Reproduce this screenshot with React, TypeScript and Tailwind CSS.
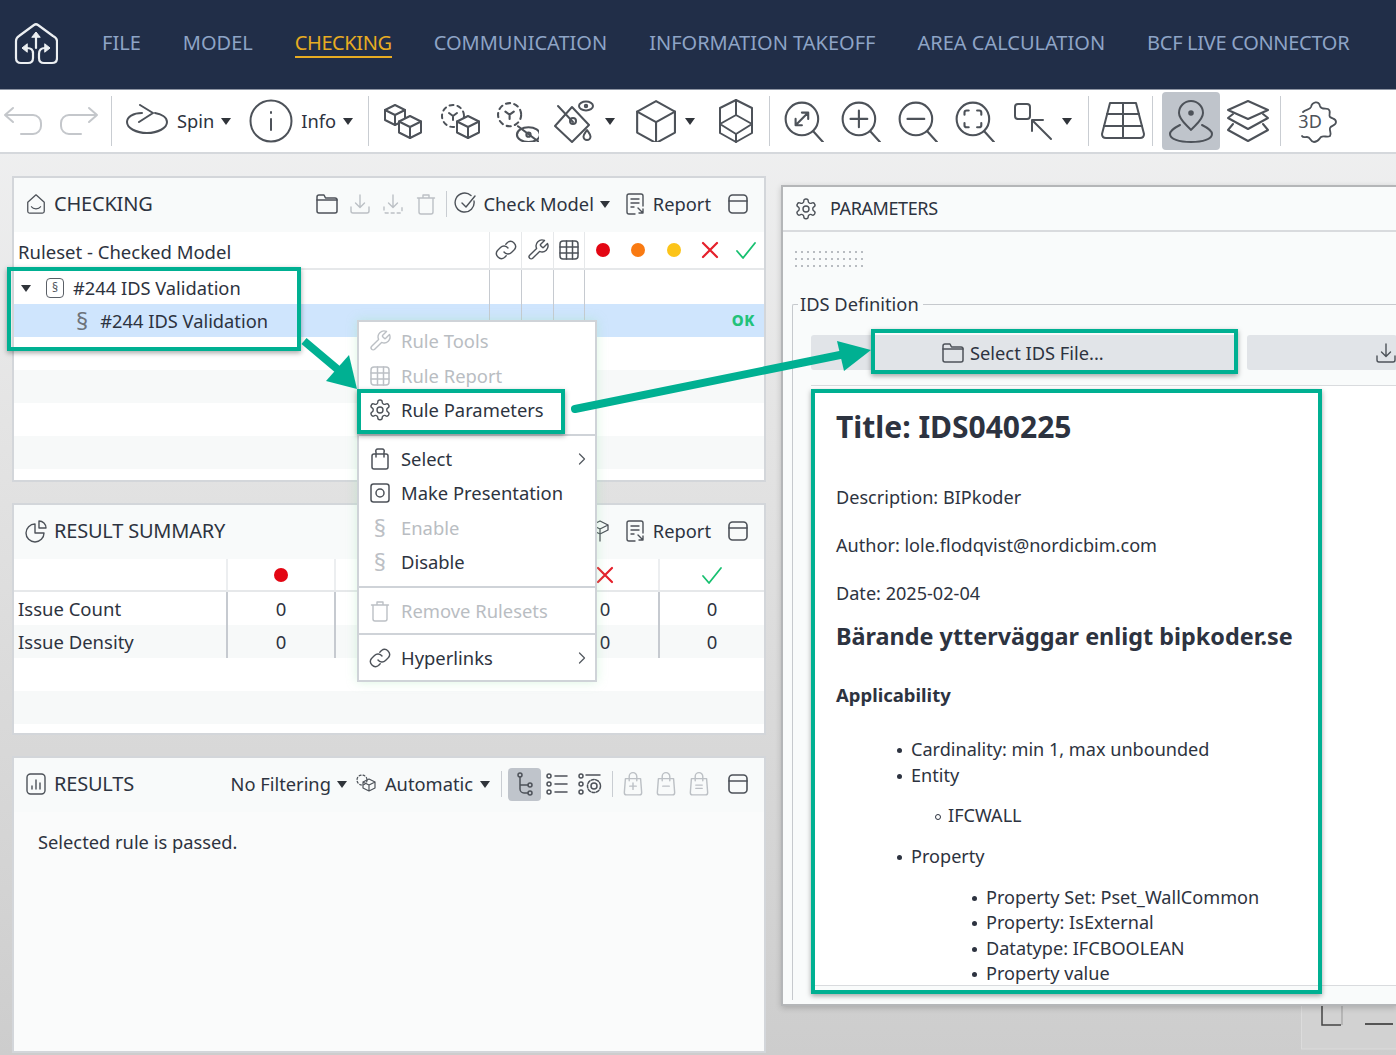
import type { ReactNode } from "react";
import { ChevronRight } from "lucide-react";

const TAN = "#4d5259";
const OFF = "#bcc0c5";

function Ico({ s = 40, w, h, c = TAN, sw = 2, vb = "0 0 40 40", children, className }: { s?: number; w?: number; h?: number; c?: string; sw?: number; vb?: string; children: ReactNode; className?: string }) {
  return (
    <svg width={w ?? s} height={h ?? s} viewBox={vb} fill="none" stroke={c} strokeWidth={sw} strokeLinecap="round" strokeLinejoin="round" className={className}>
      {children}
    </svg>
  );
}

const Caret = ({ className = "" }: { className?: string }) => (
  <span className={`inline-block w-0 h-0 border-l-[5.5px] border-r-[5.5px] border-t-[7px] border-l-transparent border-r-transparent border-t-[#30343a] ${className}`} />
);

const Sep = ({ className = "" }: { className?: string }) => <div className={`w-px h-[50px] bg-[#c9cdd2] shrink-0 ${className}`} />;

const Cube = ({ x, y, r, fill = "none" }: { x: number; y: number; r: number; fill?: string }) => (
  <g>
    <path fill={fill} d={`M${x} ${y - r}L${x + r} ${y - r / 2}V${y + r / 2}L${x} ${y + r}L${x - r} ${y + r / 2}V${y - r / 2}Z`} />
    <path d={`M${x - r} ${y - r / 2}L${x} ${y}L${x + r} ${y - r / 2}M${x} ${y}V${y + r}`} />
  </g>
);

const Mag = ({ children }: { children?: ReactNode }) => (
  <Ico s={42}>
    <circle cx="18" cy="18" r="15.5" />
    <path d="M29 30L38 40" />
    {children}
  </Ico>
);

const Gear = ({ s = 24, c = TAN }: { s?: number; c?: string }) => (
  <Ico s={s} vb="0 0 24 24" c={c} sw={1.4}>
    <circle cx="12" cy="12" r="3" />
    <path d="M12.2 2h-.4a2 2 0 0 0-2 2v.2a2 2 0 0 1-1 1.7l-.4.2a2 2 0 0 1-2 0l-.2-.1a2 2 0 0 0-2.7.7l-.2.4a2 2 0 0 0 .7 2.7l.2.1a2 2 0 0 1 1 1.7v.5a2 2 0 0 1-1 1.8l-.2.1a2 2 0 0 0-.7 2.7l.2.4a2 2 0 0 0 2.7.7l.2-.1a2 2 0 0 1 2 0l.4.2a2 2 0 0 1 1 1.7v.2a2 2 0 0 0 2 2h.4a2 2 0 0 0 2-2v-.2a2 2 0 0 1 1-1.7l.4-.2a2 2 0 0 1 2 0l.2.1a2 2 0 0 0 2.7-.7l.2-.4a2 2 0 0 0-.7-2.7l-.2-.1a2 2 0 0 1-1-1.8v-.5a2 2 0 0 1 1-1.7l.2-.1a2 2 0 0 0 .7-2.7l-.2-.4a2 2 0 0 0-2.7-.7l-.2.1a2 2 0 0 1-2 0l-.4-.2a2 2 0 0 1-1-1.7V4a2 2 0 0 0-2-2z" />
  </Ico>
);

const LinkI = ({ s = 24, c = TAN }: { s?: number; c?: string }) => (
  <Ico s={s} vb="0 0 24 24" c={c} sw={1.4}>
    <path d="M10 14a5 5 0 0 0 7.5.5l3-3a5 5 0 0 0-7-7l-1.7 1.7" />
    <path d="M14 10a5 5 0 0 0-7.5-.5l-3 3a5 5 0 0 0 7 7l1.7-1.7" />
  </Ico>
);

const WrenchI = ({ s = 24, c = TAN }: { s?: number; c?: string }) => (
  <Ico s={s} vb="0 0 24 24" c={c} sw={1.4}>
    <path d="M14.7 6.3a1 1 0 0 0 0 1.4l1.6 1.6a1 1 0 0 0 1.4 0l3.8-3.8a6 6 0 0 1-7.9 7.9l-6.9 6.9a2.1 2.1 0 0 1-3-3l6.9-6.9a6 6 0 0 1 7.9-7.9z" />
  </Ico>
);

const TableI = ({ s = 22, c = TAN }: { s?: number; c?: string }) => (
  <Ico s={s} vb="0 0 22 22" c={c} sw={1.5}>
    <rect x="2" y="2" width="18" height="18" rx="3" />
    <path d="M2 8h18M2 14h18M8.5 2v18M14.5 2v18" />
  </Ico>
);

const FolderI = ({ s = 24, c = TAN }: { s?: number; c?: string }) => (
  <Ico s={s} vb="0 0 24 24" c={c} sw={1.5}>
    <path d="M2 5a2 2 0 0 1 2-2h5l1.5 3H20a2 2 0 0 1 2 2v11a2 2 0 0 1-2 2H4a2 2 0 0 1-2-2z" />
    <path d="M2 8h20" />
  </Ico>
);

const DownI = ({ s = 24, c = OFF, dashed = false }: { s?: number; c?: string; dashed?: boolean }) => (
  <Ico s={s} vb="0 0 24 24" c={c} sw={1.4}>
    <path d="M12 3v12M7.5 11l4.5 4.5L16.5 11" />
    <path d="M3 15v4a2 2 0 0 0 2 2h14a2 2 0 0 0 2-2v-4" strokeDasharray={dashed ? "3 3" : undefined} />
  </Ico>
);

const TrashI = ({ s = 24, c = OFF }: { s?: number; c?: string }) => (
  <Ico s={s} vb="0 0 24 24" c={c} sw={1.4}>
    <path d="M5 6h14v14a2 2 0 0 1-2 2H7a2 2 0 0 1-2-2zM3.5 6h17M9 6V3h6v3" />
  </Ico>
);

const ReportI = () => (
  <Ico s={24} vb="0 0 24 24" sw={1.4}>
    <path d="M11 22H5a2 2 0 0 1-2-2V4a2 2 0 0 1 2-2h12a2 2 0 0 1 2 2v10" />
    <path d="M7 7h8M7 11h8M7 15h3M14 16l5 5M19 17v4h-4" />
  </Ico>
);

const PanelI = () => (
  <Ico s={24} vb="0 0 24 24" sw={1.6}>
    <rect x="3" y="3" width="18" height="18" rx="3.5" />
    <path d="M3 9h18" />
  </Ico>
);

const Section = ({ s = 24, c = "#8b9097" }: { s?: number; c?: string }) => (
  <span style={{ fontSize: s, color: c }} className="leading-none">§</span>
);

const Dot = ({ c }: { c: string }) => <span style={{ background: c }} className="block w-[14px] h-[14px] rounded-full" />;
const RedX = () => (
  <Ico s={20} vb="0 0 20 20" c="#e5202b" sw={2.2}><path d="M3 3l14 14M17 3L3 17" /></Ico>
);
const GreenCheck = () => (
  <Ico s={22} vb="0 0 22 22" c="#17c070" sw={1.8}><path d="M2 12l6 7L20 4" /></Ico>
);

const statusIcons = [<Dot c="#e30613" />, <Dot c="#f97a12" />, <Dot c="#fcc419" />, <RedX />, <GreenCheck />];

const navItems = ["FILE", "MODEL", "COMMUNICATION", "INFORMATION TAKEOFF", "AREA CALCULATION"];

function Header() {
  const item = "text-[20px] leading-[26px] text-[#8ea4c6] border-b-2 border-transparent";
  return (
    <header className="h-[90px] bg-[#212e48] flex items-center border-b border-[#8e95a3]">
      <svg width="44" height="44" viewBox="0 0 44 44" fill="none" stroke="#eceff2" strokeWidth="2.2" strokeLinecap="round" strokeLinejoin="round" className="ml-[14px] -mt-[2px]">
        <path d="M19 30V36Q19 41 14 41H7Q2 41 2 36V19Q2 16 5 14L20 3Q22 1.500 24 3L39 14Q43 16 43 19V36Q43 41 38 41H30Q25 41 25 36V32Q25 26 31 26" />
        <path d="M19 31Q19 26 13 26" />
        <path d="M22 26V15" />
        <path d="M13 22L8 26L13 30ZM18 15L22 10L26 15ZM31 22L36 26L31 30Z" fill="#eceff2" strokeWidth="1" />
      </svg>
      <nav className="flex items-center gap-[42px] ml-[44px] -mt-[1px]">
        <span className={item}>{navItems[0]}</span>
        <span className={item}>{navItems[1]}</span>
        <span className="text-[20px] leading-[26px] tracking-[-0.4px] text-[#e8ac22] border-b-2 border-[#e8ac22]">CHECKING</span>
        <span className={item}>{navItems[2]}</span>
        <span className={item}>{navItems[3]}</span>
        <span className={item}>{navItems[4]}</span>
        <span className="text-[20px] leading-[26px] tracking-[-0.3px] text-[#8ea4c6] border-b-2 border-transparent">BCF LIVE CONNECTOR</span>
      </nav>
    </header>
  );
}

function Toolbar() {
  return (
    <div className="h-[64px] bg-white border-b-2 border-[#d5d8dc] flex items-center text-[18.300px] text-[#2d3340]">
      <Ico w={40} h={32} vb="0 0 40 32" c="#c4c7cb" className="ml-[3px]"><path d="M10 3L2 10l8 7M2 10h28a8 8 0 0 1 8 8v3a8 8 0 0 1-8 8H18" /></Ico>
      <Ico w={40} h={32} vb="0 0 40 32" c="#c4c7cb" className="ml-[16px]"><path d="M30 3l8 7-8 7M38 10H10a8 8 0 0 0-8 8v3a8 8 0 0 0 8 8h12" /></Ico>
      <Sep className="ml-[12px]" />
      <Ico w={44} h={34} vb="0 0 44 34" className="ml-[13px]">
        <path d="M15 1L28 9L14 18" />
        <path d="M17 9C8 9 2 13 2 18C2 24 11 29 22 29C33 29 42 24 42 18C42 13 36 10 30 9" />
      </Ico>
      <span className="ml-[8px]">Spin</span>
      <Caret className="ml-[7px]" />
      <Ico s={44} className="ml-[18px]" vb="0 0 44 44"><circle cx="22" cy="22" r="20.500" /><path d="M22 20v11M22 13v1" /></Ico>
      <span className="ml-[8px]">Info</span>
      <Caret className="ml-[6.500px]" />
      <Sep className="ml-[15.500px]" />
      <div className="w-[57px] ml-[5px] flex justify-center"><Ico s={40}><Cube x={12} y={14} r={10} /><Cube x={27} y={26} r={11} fill="#fff" /></Ico></div>
      <div className="w-[57px] flex justify-center"><Ico s={40}><circle cx="13" cy="15" r="11" strokeDasharray="4 4" /><path d="M9 12l4 3 4-3M13 15v4" /><Cube x={28} y={26} r={11} fill="#fff" /></Ico></div>
      <div className="w-[60px] flex justify-center"><Ico s={42}><circle cx="12" cy="14" r="11" strokeDasharray="4 4" /><path d="M8 11l4 3 4-3M12 14v4" /><ellipse cx="30" cy="33" rx="11" ry="7" /><circle cx="30" cy="33" r="2" /><path d="M20 25l20 15" /></Ico></div>
      <div className="w-[54px] flex justify-center">
        <Ico w={42} h={46} vb="0 0 42 46">
          <path d="M18 9L35 27L18 44L1 28Z" />
          <path d="M4 8L19 24" />
          <circle cx="19" cy="23" r="3" />
          <ellipse cx="32" cy="8" rx="7" ry="4.500" />
          <circle cx="32" cy="8" r="1.200" />
          <path d="M33 32c-2 3-3.500 4.500-3.500 6.500a3.500 3.500 0 0 0 7 0c0-2-1.500-3.500-3.500-6.500z" />
        </Ico>
      </div>
      <Caret className="ml-[3px]" />
      <div className="ml-[19px]"><Ico s={42}><path d="M21 1l18 10v20l-18 10-18-10V11z" /><path d="M3 11l18 10 18-10M21 21v20" /></Ico></div>
      <Caret className="ml-[9px]" />
      <div className="ml-[24px]">
        <Ico w={34} h={44} vb="0 0 34 44"><path d="M17 1L33 9V34L17 43L1 34V9Z" /><path d="M17 1V16M1 25L17 16L33 25L17 35ZM17 35V43" /></Ico>
      </div>
      <Sep className="ml-[16px]" />
      <div className="w-[57px] ml-[5px] flex justify-center"><Mag><path d="M12 24l12-12M12 18v6h6M18 12h6v6" /></Mag></div>
      <div className="w-[57px] flex justify-center"><Mag><path d="M18 10v16M10 18h16" /></Mag></div>
      <div className="w-[57px] flex justify-center"><Mag><path d="M10 18h16" /></Mag></div>
      <div className="w-[58px] flex justify-center"><Mag><path d="M10 14v-2a2 2 0 0 1 2-2h2M22 10h2a2 2 0 0 1 2 2v2M26 22v2a2 2 0 0 1-2 2h-2M14 26h-2a2 2 0 0 1-2-2v-2" /></Mag></div>
      <div className="w-[58px] flex justify-center"><Ico s={40}><rect x="2" y="3" width="15" height="15" rx="3" /><path d="M20 20l18 18M19 30V19h11" /></Ico></div>
      <Caret />
      <Sep className="ml-[16px]" />
      <div className="w-[59px] ml-[4px] flex justify-center">
        <Ico w={44} h={38} vb="0 0 44 38"><path d="M9 1H35L43 32Q43 36 39 36H5Q1 36 1 32Z" /><path d="M6 12H38M3 24H41M22 1V36" /></Ico>
      </div>
      <Sep />
      <div className="ml-[9px] w-[58px] h-[58px] bg-[#bfc4cb] rounded-[4px] flex items-center justify-center">
        <Ico s={46} vb="0 0 46 46">
          <path d="M23 32C19 27 11 22 11 15A12 12 0 0 1 35 15C35 22 27 27 23 32Z" />
          <circle cx="23" cy="15" r="1.800" fill={TAN} />
          <path d="M12 27C6 30 2 33 2 36C2 41 11 44 23 44C35 44 44 41 44 36C44 33 40 30 34 27" />
        </Ico>
      </div>
      <div className="w-[56px] flex justify-center">
        <Ico w={42} h={44} vb="0 0 42 44">
          <path d="M21 2L41 11L21 20L1 11Z" />
          <path d="M6 15L1 19L21 30L41 19L36 15" />
          <path d="M6 25L1 31L21 42L41 31L36 25" />
        </Ico>
      </div>
      <Sep className="ml-[4px]" />
      <div className="ml-[16px] relative w-[40px] h-[44px] flex items-center">
        <svg width="40" height="44" viewBox="0 0 40 44" fill="none" stroke={TAN} strokeWidth="1.800" strokeLinecap="round" strokeLinejoin="round" className="absolute inset-0">
          <path d="M6 13C9 10 13 11 14 8C15 3 22 1 23 7C24 11 29 9 31 10C35 12 31 16 33 18C35 20 39 19 39 23C39 27 34 26 33 29C32 32 35 34 33 37C30 39 27 36 24 38C22 40 21 43 17 43C13 43 14 38 10 38C8 38 6 39 5 37" />
        </svg>
        <span className="relative text-[18px] leading-none text-[#4d5259] ml-[1px] tracking-[0.2px]">3D</span>
      </div>
    </div>
  );
}

function Panel({ icon, title, right, className = "bg-white", children }: { icon: ReactNode; title: string; right?: ReactNode; className?: string; children?: ReactNode }) {
  return (
    <section className={`w-[754px] border-2 border-[#d3d6da] flex flex-col ${className}`}>
      <div className="h-[54px] shrink-0 bg-[#f8fafa] flex items-center pl-[10px] pr-[14px] pb-[2px]">
        <span className="w-[24px] flex justify-center">{icon}</span>
        <span className="ml-[6px] text-[20px] tracking-[-0.2px] text-[#2d3340]">{title}</span>
        <div className="ml-auto flex items-center">{right}</div>
      </div>
      {children}
    </section>
  );
}

const ReportBtn = () => (
  <>
    <ReportI />
    <span className="ml-[5px] text-[18.300px]">Report</span>
    <span className="ml-[15px] flex"><PanelI /></span>
  </>
);

function Checking() {
  const cols = "grid grid-cols-[475px_32px_32px_31px_36px_36px_36px_36px_36px]";
  const cell = "border-l border-[#c6cad0]";
  return (
    <Panel
      className="h-[306px] bg-white"
      icon={<Ico s={22} vb="0 0 24 24" sw={1.4}><path d="M3 10l9-8 9 8v10a2 2 0 0 1-2 2H5a2 2 0 0 1-2-2z" /><path d="M7 15c2 3 8 3 10 0" /></Ico>}
      title="CHECKING"
      right={
        <>
          <FolderI />
          <span className="ml-[9px] flex"><DownI /></span>
          <span className="ml-[9px] flex"><DownI dashed /></span>
          <span className="ml-[9px] flex"><TrashI /></span>
          <div className="w-px h-[26px] bg-[#c9cdd2] ml-[8px]" />
          <span className="ml-[7px] flex"><Ico s={24} vb="0 0 24 24" sw={1.4}><path d="M20 9a9.500 9.500 0 1 1-3-5.500M8 11l4 4 9-11" /></Ico></span>
          <span className="ml-[5px] text-[18.300px]">Check Model</span>
          <Caret className="ml-[6px]" />
          <span className="ml-[14px] flex items-center"><ReportBtn /></span>
        </>
      }
    >
      <div className={`${cols} h-[38px] items-stretch border-b-2 border-[#e6e8ea] text-[18.500px] text-[#2d3340]`}>
        <div className="pl-[4px] flex items-center pt-[3px]">Ruleset - Checked Model</div>
        <div className={`${cell} border-[#e6e8ea] flex items-center justify-center`}><LinkI /></div>
        <div className={`${cell} border-[#e6e8ea] flex items-center justify-center`}><WrenchI /></div>
        <div className={`${cell} border-[#e6e8ea] flex items-center justify-center`}><TableI /></div>
        {statusIcons.map((ic, i) => (
          <div key={i} className={`flex items-center justify-center ${i === 0 ? "border-l border-[#e6e8ea]" : ""}`}>{ic}</div>
        ))}
      </div>
      <div className={`${cols} h-[34px] items-stretch text-[18.300px] text-[#2d3340]`}>
        <div className="flex items-center pl-[7px] pt-[2px]">
          <Caret />
          <span className="ml-[15px] w-[18px] h-[20px] border-[1.500px] border-[#5b6067] rounded-[4px] flex items-center justify-center text-[12px] leading-none text-[#4d5259]">§</span>
          <span className="ml-[9px]">#244 IDS Validation</span>
        </div>
        <div className={cell} /><div className={cell} /><div className={cell} /><div className={`${cell} col-span-5`} />
      </div>
      <div className={`${cols} h-[33px] items-stretch bg-[#cfe5fd] text-[18.300px] text-[#2d3340]`}>
        <div className="flex items-center pl-[62px]">
          <Section s={24} c="#6d737b" />
          <span className="ml-[12px]">#244 IDS Validation</span>
        </div>
        <div className={cell} /><div className={cell} /><div className={cell} />
        <div className={`${cell} col-span-5 flex items-center justify-end pr-[9px] text-[15px] font-extrabold tracking-[0.6px] text-[#22c27a]`}>OK</div>
      </div>
      <div className="h-[33px]" />
      <div className="h-[33px] bg-[#f7f9f9]" />
      <div className="h-[33px]" />
      <div className="h-[33px] bg-[#f7f9f9]" />
    </Panel>
  );
}

function Summary() {
  const cols = "grid grid-cols-[212px_108px_108px_108px_108px_106px]";
  const cell = "border-l-2 border-[#c6cad0] flex items-center justify-center";
  const visibleCols = [true, false, false, true, true];
  return (
    <Panel
      className="h-[232px] bg-white"
      icon={<Ico s={24} vb="0 0 24 24" sw={1.4}><path d="M11 5a9 9 0 1 0 9 9h-9zM15 2v7h7a7 7 0 0 0-7-7z" /></Ico>}
      title="RESULT SUMMARY"
      right={
        <>
          <Ico s={24} vb="0 0 24 24" sw={1.3}><path d="M12 2l8 4v5l-8 4-8-4V6zM4 6l8 4 8-4M12 10v12" /></Ico>
          <span className="ml-[12px] flex items-center"><ReportBtn /></span>
        </>
      }
    >
      <div className={`${cols} h-[33px] border-b-2 border-[#e6e8ea]`}>
        <div />
        {statusIcons.map((ic, i) => (
          <div key={i} className="border-l-2 border-[#eceef0] flex items-center justify-center">{ic}</div>
        ))}
      </div>
      {["Issue Count", "Issue Density"].map((label, r) => (
        <div key={label} className={`${cols} h-[33px] text-[18.500px] text-[#2d3340] ${r === 1 ? "bg-[#f7f9f9]" : ""}`}>
          <div className="pl-[4px] flex items-center">{label}</div>
          {visibleCols.map((shown, z) => <div key={z} className={cell}>{shown ? "0" : ""}</div>)}
        </div>
      ))}
      <div className="h-[33px]" />
      <div className="h-[33px] bg-[#f7f9f9]" />
    </Panel>
  );
}

function Results() {
  return (
    <Panel
      className="h-[297px] bg-[#fafbfb]"
      icon={<Ico s={24} vb="0 0 24 24" sw={1.4}><rect x="3" y="2" width="18" height="20" rx="3.500" /><path d="M8 17v-3M12 17V8M16 17v-6" /></Ico>}
      title="RESULTS"
      right={
        <div className="flex items-center text-[18.300px] text-[#2d3340]">
          <span>No Filtering</span>
          <Caret className="ml-[6px]" />
          <span className="ml-[8px] flex"><Ico s={22} vb="0 0 22 22" sw={1.2}><circle cx="7" cy="7" r="5" strokeDasharray="2 2" /><path d="M14 6l6 3v6l-6 3-6-3V9zM8 9l6 3 6-3M14 12v6" /></Ico></span>
          <span className="ml-[8px]">Automatic</span>
          <Caret className="ml-[7px]" />
          <div className="w-px h-[26px] bg-[#c9cdd2] ml-[11px]" />
          <div className="ml-[6px] w-[33px] h-[33px] rounded-[4px] bg-[#bfc4cb] flex items-center justify-center">
            <Ico s={26} vb="0 0 26 26" sw={1.5}><circle cx="8" cy="4" r="2" /><circle cx="18" cy="14" r="2" /><circle cx="18" cy="22" r="2" /><path d="M8 6v12a4 4 0 0 0 4 4h4M8 14h8" /></Ico>
          </div>
          <span className="ml-[3px] flex"><Ico s={26} vb="0 0 26 26" sw={1.5}><circle cx="5" cy="5" r="2" /><circle cx="5" cy="13" r="2" /><circle cx="5" cy="21" r="2" /><path d="M11 5h12M11 13h12M11 21h12" /></Ico></span>
          <span className="ml-[7px] flex"><Ico s={26} vb="0 0 26 26" sw={1.5}><circle cx="4" cy="5" r="2" /><circle cx="4" cy="13" r="2" /><circle cx="4" cy="21" r="2" /><path d="M9 4h14" /><circle cx="17" cy="15" r="3" /><circle cx="17" cy="15" r="6.500" strokeDasharray="3 1.500" /></Ico></span>
          <div className="w-px h-[26px] bg-[#c9cdd2] ml-[9px]" />
          {["M9 14h6M12 11v6", "M9 14h6", "M9 13h6M9 16h6"].map((d) => (
            <span key={d} className="ml-[7px] flex"><Ico s={26} vb="0 0 24 24" c={OFF} sw={1.300}><path d="M5 7h14l1 13a2 2 0 0 1-2 2H6a2 2 0 0 1-2-2zM8.500 9V5a3.500 3.500 0 0 1 7 0v4" /><path d={d} /></Ico></span>
          ))}
          <span className="ml-[14px] flex"><PanelI /></span>
        </div>
      }
    >
      <p className="mt-[16px] ml-[24px] text-[18.300px] text-[#2d3340]">Selected rule is passed.</p>
    </Panel>
  );
}

type MenuEntry = { label: string; icon: ReactNode; off?: boolean; arrow?: boolean };

const Bag = ({ c = TAN }: { c?: string }) => (
  <Ico s={24} vb="0 0 24 24" c={c} sw={1.500}><path d="M6 7h12a2 2 0 0 1 2 2v11a2 2 0 0 1-2 2H6a2 2 0 0 1-2-2V9a2 2 0 0 1 2-2zM8 10V5a2 2 0 0 1 2-3h4a2 2 0 0 1 2 3v5" /></Ico>
);

const menuGroups: MenuEntry[][] = [
  [
    { label: "Rule Tools", icon: <WrenchI c={OFF} />, off: true },
    { label: "Rule Report", icon: <TableI c={OFF} />, off: true },
    { label: "Rule Parameters", icon: <Gear /> },
  ],
  [
    { label: "Select", icon: <Bag />, arrow: true },
    { label: "Make Presentation", icon: <Ico s={22} vb="0 0 22 22" sw={1.500}><rect x="2" y="2" width="18" height="18" rx="2.500" /><circle cx="11" cy="11" r="4" /></Ico> },
    { label: "Enable", icon: <Section s={24} c={OFF} />, off: true },
    { label: "Disable", icon: <Section s={24} c={OFF} /> },
  ],
  [{ label: "Remove Rulesets", icon: <TrashI />, off: true }],
  [{ label: "Hyperlinks", icon: <LinkI />, arrow: true }],
];

function ContextMenu() {
  return (
    <div className="absolute left-[357px] top-[320px] w-[240px] bg-white border-2 border-[#cfd3d8] shadow-[0_0_10px_rgba(150,230,170,0.35)] text-[18.400px] pt-[2px] pb-[4px]">
      {menuGroups.map((group, gi) => (
        <div key={gi} className={gi === 0 ? "" : gi === 3 ? "border-t-2 border-[#cfd3d8] pt-[6px] mt-[5px]" : "border-t-2 border-[#cfd3d8] pt-[6px] mt-[6px]"}>
          {group.map((m) => (
            <div key={m.label} className="h-[34.500px] flex items-center pl-[9px] pr-[3px]">
              <span className="w-[24px] flex justify-center">{m.icon}</span>
              <span className={`ml-[9px] ${m.off ? "text-[#b9bdc2]" : "text-[#2d3340]"}`}>{m.label}</span>
              {m.arrow && <ChevronRight size={20} strokeWidth={1.500} className="ml-auto text-[#555a61]" />}
            </div>
          ))}
        </div>
      ))}
    </div>
  );
}

const Bullet = () => <span className="absolute left-[-14px] top-[11px] w-[5px] h-[5px] rounded-full bg-[#2d3340]" />;

function Parameters() {
  const dots = Array.from({ length: 36 });
  return (
    <div className="absolute left-[781px] top-[185px] w-[616px] h-[821px] border-2 border-[#b4b6b8] border-r-0 bg-[#f9fbfb] shadow-[0_2px_6px_rgba(0,0,0,0.18)] flex flex-col text-[#2d3340]">
      <div className="h-[45px] shrink-0 border-b-2 border-[#d9dbde] flex items-center pl-[11px]">
        <Gear />
        <span className="ml-[12px] text-[18px] tracking-[-0.4px]">PARAMETERS</span>
      </div>
      <div className="grid grid-cols-[repeat(12,3px)] gap-x-[3px] gap-y-[5px] ml-[12px] mt-[19px]">
        {dots.map((_, i) => <span key={i} className="w-[2px] h-[2px] bg-[#b8bcc1]" />)}
      </div>
      <fieldset className="ml-[9px] mt-[25px] mb-[4px] border-l border-t border-[#c6c9cd] rounded-tl-[2px] flex-1 min-h-0 pl-[18px]">
        <legend className="text-[18.300px] ml-[-13px] px-[2px] pr-[4px] leading-[24px]">IDS Definition</legend>
        <div className="flex gap-[9px] mt-[19px] h-[35px]">
          <div className="w-[427px] bg-[#e1e4e8] rounded-[3px] flex items-center pl-[130px] text-[18.300px]">
            <FolderI />
            <span className="ml-[5px]">Select IDS File...</span>
          </div>
          <div className="flex-1 bg-[#e1e4e8] rounded-[3px] flex items-center justify-end overflow-hidden">
            <span className="mr-[-1px] flex"><DownI c={TAN} /></span>
          </div>
        </div>
        <div className="mt-[15px] bg-white border-t border-b border-[#d9dbde] h-[601px] overflow-hidden pl-[25px] text-[18.100px] leading-[25.600px]">
          <h1 className="text-[30px] font-bold leading-[40px] mt-[21px]">Title: IDS040225</h1>
          <p className="mt-[38px]">Description: BIPkoder</p>
          <p className="mt-[22.400px]">Author: lole.flodqvist@nordicbim.com</p>
          <p className="mt-[22.400px]">Date: 2025-02-04</p>
          <h2 className="text-[23.400px] font-bold leading-[30px] mt-[14px]">Bärande ytterväggar enligt bipkoder.se</h2>
          <h3 className="text-[18.500px] font-bold mt-[31px]">Applicability</h3>
          <ul className="pl-[75px] mt-[30px]">
            <li className="relative"><Bullet />Cardinality: min 1, max unbounded</li>
            <li className="relative"><Bullet />Entity
              <ul className="pl-[37px] mt-[15px] mb-[15px]">
                <li className="relative"><span className="absolute left-[-13px] top-[11px] w-[6px] h-[6px] rounded-full border border-[#2d3340]" />IFCWALL</li>
              </ul>
            </li>
            <li className="relative"><Bullet />Property
              <ul className="pl-[75px] mt-[15px]">
                <li className="relative"><Bullet />Property Set: Pset_WallCommon</li>
                <li className="relative"><Bullet />Property: IsExternal</li>
                <li className="relative"><Bullet />Datatype: IFCBOOLEAN</li>
                <li className="relative"><Bullet />Property value</li>
              </ul>
            </li>
          </ul>
        </div>
      </fieldset>
    </div>
  );
}

const boxCls = "absolute border-[4px] border-[#00b092] shadow-[0_2px_5px_rgba(0,0,0,0.35)] pointer-events-none";

function Callouts() {
  return (
    <>
      <div className={`${boxCls} left-[7px] top-[267px] w-[294px] h-[84px]`} />
      <div className={`${boxCls} left-[357px] top-[389px] w-[208px] h-[45px]`} />
      <div className={`${boxCls} left-[871px] top-[329px] w-[367px] h-[45px]`} />
      <div className={`${boxCls} left-[811px] top-[389px] w-[511px] h-[605px]`} />
      <svg width="1396" height="1055" className="absolute inset-0 pointer-events-none" fill="#00b092" stroke="none">
        <path d="M304 341L342 373" stroke="#00b092" strokeWidth="8" />
        <path d="M357 389L326 381L349 355Z" />
        <path d="M575 409L840 355" stroke="#00b092" strokeWidth="8" strokeLinecap="round" />
        <path d="M871 350L837 341L844 371Z" />
      </svg>
    </>
  );
}

export default function App() {
  return (
    <div className="relative w-[1396px] h-[1055px] overflow-hidden bg-[linear-gradient(180deg,#f4f5f6_0%,#e4e4e4_40%,#cdcdcd_100%)] font-['Noto_Sans',sans-serif] text-[#2d3340]">
      <Header />
      <Toolbar />
      <main className="flex flex-col gap-[21px] pl-[12px] pt-[22px]">
        <Checking />
        <Summary />
        <Results />
      </main>
      <ContextMenu />
      <svg width="95" height="45" viewBox="0 0 95 45" className="absolute left-[1301px] top-[1005px]" fill="none">
        <rect x="0.500" y="-2" width="100" height="46" fill="#d2d2d2" stroke="#dcdcdc" />
        <path d="M21 0V20H40" stroke="#444" strokeWidth="1.500" />
        <path d="M41 0V20" stroke="#999" />
        <path d="M64 19H92" stroke="#555" strokeWidth="2" />
      </svg>
      <Parameters />
      <Callouts />
    </div>
  );
}
